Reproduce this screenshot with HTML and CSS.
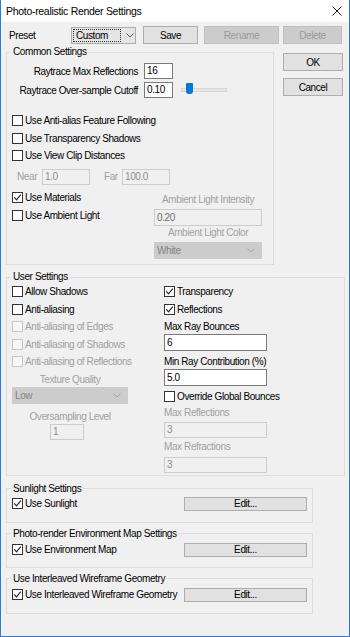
FILE: index.html
```html
<!DOCTYPE html>
<html>
<head>
  <title>Photo-realistic Render Settings</title>
  <link rel="stylesheet" href="styles.css">
</head>
<body>
  <div class="window">
    <div class="titlebar">
      <span class="title">Photo-realistic Render Settings</span>
      <svg class="close-icon" width="10" height="10" viewBox="0 0 10 10">
        <path d="M0.5 0.5 L9.5 9.5 M9.5 0.5 L0.5 9.5" stroke="#1a1a1a" stroke-width="1" fill="none"/>
      </svg>
    </div>

    <div class="content">
      <!-- Preset -->
      <div class="preset-row">
        <span class="preset-label">Preset</span>
        <div class="combo">
          <span class="combo-text">Custom</span>
          <svg class="chevron" width="8" height="5" viewBox="0 0 8 5"><path d="M0.5 0.5 L4 4 L7.5 0.5" stroke="#555" fill="none"/></svg>
        </div>
        <button class="btn btn-save">Save</button>
        <button class="btn btn-rename" disabled>Rename</button>
        <button class="btn btn-delete" disabled>Delete</button>
      </div>

      <div class="main-row">
        <fieldset class="group group-common">
          <legend>Common Settings</legend>
          <div class="ray-grid">
            <span class="ray-label">Raytrace Max Reflections</span>
            <div class="field">16</div>
            <span></span>
            <span class="ray-label">Raytrace Over-sample Cutoff</span>
            <div class="field">0.10</div>
            <div class="slider">
              <div class="slider-track"></div>
              <div class="slider-thumb"></div>
            </div>
          </div>

          <div class="common-checks">
            <div class="check-row"><span class="box"></span>Use Anti-alias Feature Following</div>
            <div class="check-row"><span class="box"></span>Use Transparency Shadows</div>
            <div class="check-row"><span class="box"></span>Use View Clip Distances</div>
          </div>

          <div class="clip-row">
            <span class="clip-label near-label">Near</span>
            <div class="field field-off field-clip">1.0</div>
            <span class="clip-label far-label">Far</span>
            <div class="field field-off field-clip">100.0</div>
          </div>

          <div class="material-row">
            <div class="material-checks">
              <div class="check-row"><span class="box"><svg width="9" height="9" viewBox="0 0 9 9"><path d="M1.3 4.4 L3.5 6.8 L7.8 1.6" stroke="#222" stroke-width="1.1" fill="none"/></svg></span>Use Materials</div>
              <div class="check-row"><span class="box"></span>Use Ambient Light</div>
            </div>
            <div class="ambient">
              <div class="caption">Ambient Light Intensity</div>
              <div class="field field-off field-ambient">0.20</div>
              <div class="caption">Ambient Light Color</div>
              <div class="select select-off select-ambient">
                <span>White</span>
                <svg width="8" height="5" viewBox="0 0 8 5"><path d="M0.5 0.5 L4 4 L7.5 0.5" stroke="#a9a9a9" fill="none"/></svg>
              </div>
            </div>
          </div>
        </fieldset>

        <div class="dialog-buttons">
          <button class="btn btn-dialog">OK</button>
          <button class="btn btn-dialog">Cancel</button>
        </div>
      </div>

      <!-- User settings -->
      <fieldset class="group group-user">
        <legend>User Settings</legend>
        <div class="user-cols">
          <div class="user-left">
            <div class="check-row"><span class="box"></span>Allow Shadows</div>
            <div class="check-row"><span class="box"></span>Anti-aliasing</div>
            <div class="check-row row-off"><span class="box box-off"></span>Anti-aliasing of Edges</div>
            <div class="check-row row-off"><span class="box box-off"></span>Anti-aliasing of Shadows</div>
            <div class="check-row row-off"><span class="box box-off"></span>Anti-aliasing of Reflections</div>
            <div class="caption texture-caption">Texture Quality</div>
            <div class="select select-off select-texture">
              <span>Low</span>
              <svg width="8" height="5" viewBox="0 0 8 5"><path d="M0.5 0.5 L4 4 L7.5 0.5" stroke="#a9a9a9" fill="none"/></svg>
            </div>
            <div class="caption oversample-caption">Oversampling Level</div>
            <div class="field field-off field-oversample">1</div>
          </div>

          <div class="user-right">
            <div class="check-row"><span class="box"><svg width="9" height="9" viewBox="0 0 9 9"><path d="M1.3 4.4 L3.5 6.8 L7.8 1.6" stroke="#222" stroke-width="1.1" fill="none"/></svg></span>Transparency</div>
            <div class="check-row"><span class="box"><svg width="9" height="9" viewBox="0 0 9 9"><path d="M1.3 4.4 L3.5 6.8 L7.8 1.6" stroke="#222" stroke-width="1.1" fill="none"/></svg></span>Reflections</div>
            <div class="small-label label-bounces">Max Ray Bounces</div>
            <div class="field field-user">6</div>
            <div class="small-label label-contrib">Min Ray Contribution (%)</div>
            <div class="field field-user">5.0</div>
            <div class="check-row override-row"><span class="box"></span>Override Global Bounces</div>
            <div class="small-label label-off">Max Reflections</div>
            <div class="field field-off field-bounce">3</div>
            <div class="small-label label-off label-refr">Max Refractions</div>
            <div class="field field-off field-bounce">3</div>
          </div>
        </div>
      </fieldset>

      <fieldset class="group group-edit group-sun">
        <legend>Sunlight Settings</legend>
        <div class="edit-row">
          <div class="check-row"><span class="box"><svg width="9" height="9" viewBox="0 0 9 9"><path d="M1.3 4.4 L3.5 6.8 L7.8 1.6" stroke="#222" stroke-width="1.1" fill="none"/></svg></span>Use Sunlight</div>
          <button class="btn btn-edit">Edit...</button>
        </div>
      </fieldset>

      <fieldset class="group group-edit">
        <legend>Photo-render Environment Map Settings</legend>
        <div class="edit-row edit-row-low">
          <div class="check-row"><span class="box"><svg width="9" height="9" viewBox="0 0 9 9"><path d="M1.3 4.4 L3.5 6.8 L7.8 1.6" stroke="#222" stroke-width="1.1" fill="none"/></svg></span>Use Environment Map</div>
          <button class="btn btn-edit">Edit...</button>
        </div>
      </fieldset>

      <fieldset class="group group-edit">
        <legend>Use Interleaved Wireframe Geometry</legend>
        <div class="edit-row edit-row-low edit-row-last">
          <div class="check-row"><span class="box"><svg width="9" height="9" viewBox="0 0 9 9"><path d="M1.3 4.4 L3.5 6.8 L7.8 1.6" stroke="#222" stroke-width="1.1" fill="none"/></svg></span>Use Interleaved Wireframe Geometry</div>
          <button class="btn btn-edit">Edit...</button>
        </div>
      </fieldset>
    </div>
  </div>
</body>
</html>
```

FILE: styles.css
```css
* {
  box-sizing: border-box;
}
body {
  margin: 0;
  background-color: #ffffff;
  font-family: "Liberation Sans", Arial, sans-serif;
  font-size: 10px;
  letter-spacing: -0.4px;
  color: #000000;
}
.window {
  width: 350px;
  height: 637px;
  background-color: #f0f0f0;
  border: 1px solid #2b7bd4;
  border-top: none;
}

/* title bar */
.titlebar {
  display: flex;
  align-items: center;
  height: 22px;
  padding-left: 5px;
  background-color: #ffffff;
}
.title {
  font-size: 10.5px;
  letter-spacing: -0.3px;
}
.close-icon {
  margin-left: auto;
  margin-right: 7px;
}

.content {
  padding: 4px 5px 0 5px;
}

/* preset row */
.preset-row {
  display: flex;
  align-items: center;
  height: 18px;
}
.preset-label {
  width: 65px;
  padding-left: 3px;
}
.combo {
  display: flex;
  align-items: center;
  width: 65px;
  height: 17px;
  padding-left: 1px;
  border: 1px solid #adadad;
  background-color: #e5e5e5;
}
.combo-text {
  width: 48px;
  height: 13px;
  line-height: 11px;
  padding-left: 2px;
  margin-right: 5px;
  border: 1px dotted #333333;
}

.btn {
  height: 18px;
  padding: 0;
  font-family: inherit;
  font-size: 10px;
  letter-spacing: -0.4px;
  color: #000000;
  background-color: #e1e1e1;
  border: 1px solid #adadad;
}
.btn:disabled {
  background-color: #cccccc;
  border-color: #bfbfbf;
  color: #9a9a9a;
}
.btn-save {
  width: 55px;
  margin-left: 7px;
}
.btn-rename {
  width: 75px;
  margin-left: 6px;
}
.btn-delete {
  width: 59px;
  margin-left: 4px;
}

/* group boxes */
.group {
  margin: 0;
  padding: 0;
  min-width: 0;
  border: 1px solid #dcdcdc;
}
.group legend {
  margin-left: 4px;
  padding: 0 2px;
  line-height: 12px;
  font-size: 10px;
}

.main-row {
  display: flex;
  align-items: flex-start;
  margin-top: 2px;
}
.group-common {
  width: 268px;
}
.dialog-buttons {
  display: flex;
  flex-direction: column;
  gap: 7px;
  margin-left: 9px;
  margin-top: 7px;
}
.btn-dialog {
  width: 60px;
}

/* common settings */
.ray-grid {
  display: grid;
  grid-template-columns: 131px 29px 48px;
  column-gap: 6px;
  row-gap: 3px;
  align-items: center;
  margin-top: 5px;
}
.ray-label {
  text-align: right;
  white-space: nowrap;
}
.field {
  height: 16px;
  line-height: 14px;
  padding-left: 2px;
  border: 1px solid #7a7a7a;
  background-color: #ffffff;
  white-space: nowrap;
}
.field-off {
  border-color: #cccccc;
  background-color: #f0f0f0;
  color: #8d8d8d;
}
.slider {
  position: relative;
  width: 46px;
  height: 16px;
  margin-left: 2px;
}
.slider-track {
  margin-top: 6px;
  height: 4px;
  background-color: #e7e7e7;
  border: 1px solid #d6d6d6;
}
.slider-thumb {
  position: absolute;
  left: 5px;
  top: 1px;
  width: 7px;
  height: 11px;
  background-color: #007ad9;
  border-radius: 1px 1px 3px 3px;
}

.check-row {
  display: flex;
  align-items: center;
  height: 17.5px;
  white-space: nowrap;
}
.box {
  flex-shrink: 0;
  width: 11px;
  height: 11px;
  margin-right: 2px;
  border: 1px solid #333333;
  background-color: #ffffff;
}
.box svg {
  display: block;
}
.box-off {
  border-color: #c6c6c6;
  background-color: #f6f6f6;
}
.row-off {
  color: #a0a0a0;
}
.common-checks {
  margin-top: 14px;
  padding-left: 5px;
}

.clip-row {
  display: flex;
  align-items: center;
  height: 16px;
  margin-top: 4px;
}
.clip-label {
  color: #a0a0a0;
}
.near-label {
  width: 35px;
  padding-left: 10px;
}
.far-label {
  width: 32px;
  padding-left: 14px;
}
.field-clip {
  width: 48px;
}

.material-row {
  display: flex;
  margin-top: 4.5px;
  margin-bottom: 5px;
}
.material-checks {
  width: 147px;
  padding-left: 5px;
}
.ambient {
  width: 108px;
  padding-top: 3.5px;
  text-align: center;
}
.caption {
  line-height: 13px;
  color: #a0a0a0;
  white-space: nowrap;
}
.field-ambient {
  height: 17px;
  line-height: 15px;
  margin-top: 3.5px;
  text-align: left;
  color: #6d6d6d;
}
.select {
  display: flex;
  align-items: center;
  justify-content: space-between;
  height: 17px;
  padding: 0 6px 0 2px;
  text-align: left;
}
.select-off {
  background-color: #cccccc;
  border: 1px solid #cccccc;
  color: #838383;
}
.select-ambient {
  margin-top: 3px;
}

/* user settings */
.group-user {
  width: 339px;
  margin-top: 6px;
}
.user-cols {
  display: flex;
  align-items: flex-start;
  margin-bottom: 2px;
}
.user-left {
  width: 116px;
  margin-left: 5px;
}
.user-right {
  width: 103px;
  margin-left: 36px;
}
.texture-caption {
  margin-top: 2px;
  text-align: center;
}
.select-texture {
  width: 116px;
  margin-top: 1.5px;
}
.oversample-caption {
  margin-top: 5.5px;
  text-align: center;
}
.field-oversample {
  width: 34px;
  margin-left: 38px;
  margin-top: 1.5px;
}
.small-label {
  line-height: 14px;
  white-space: nowrap;
}
.label-bounces {
  margin-top: 2px;
}
.label-contrib {
  margin-top: 4px;
}
.field-user {
  height: 17px;
  line-height: 15px;
}
.override-row {
  margin-top: 2px;
}
.label-off {
  color: #a0a0a0;
}
.field-bounce {
  margin-top: 2.5px;
}
.label-refr {
  margin-top: 2px;
}

/* sunlight / environment / wireframe */
.group-edit {
  width: 307px;
  margin-top: 5px;
}
.group-sun {
  margin-top: 7px;
}
.edit-row {
  display: flex;
  align-items: center;
  height: 18px;
  padding: 0 5px;
  margin-bottom: 9px;
}
.edit-row-low {
  margin-top: 1px;
  margin-bottom: 8px;
}
.edit-row-last {
  margin-bottom: 9px;
}
.btn-edit {
  width: 123px;
  height: 14px;
  margin-left: auto;
}
```
